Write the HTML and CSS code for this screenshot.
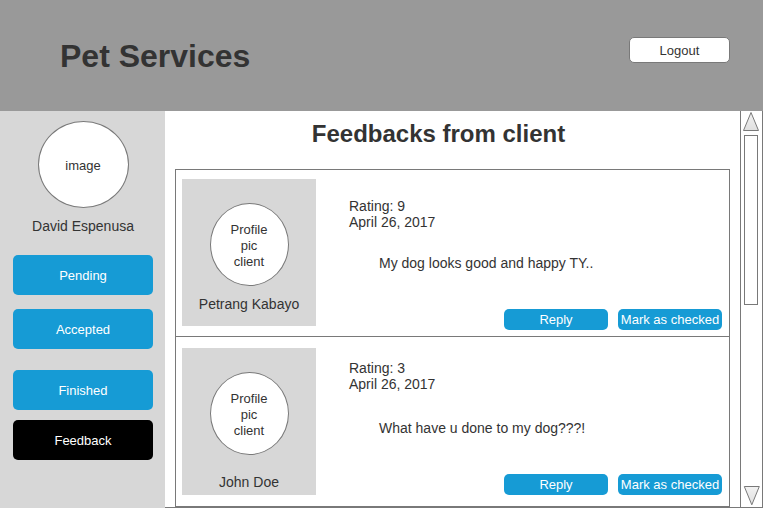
FILE: index.html
```html
<!DOCTYPE html>
<html lang="en">
<head>
  <meta charset="utf-8">
  <meta name="viewport" content="width=device-width, initial-scale=1">
  <title>Pet Services</title>
  <link rel="stylesheet" href="styles.css">
</head>
<body>
  <header class="header">
    <h1 class="brand">Pet Services</h1>
    <button class="logout" type="button">Logout</button>
  </header>
  <div class="page">
    <aside class="sidebar">
      <div class="avatar avatar-large">image</div>
      <p class="user-name">David Espenusa</p>
      <nav class="menu">
        <button class="button menu-item" type="button">Pending</button>
        <button class="button menu-item" type="button">Accepted</button>
        <button class="button menu-item menu-item-last-status" type="button">Finished</button>
        <button class="button menu-item menu-item-current" type="button">Feedback</button>
      </nav>
    </aside>
    <div class="content">
      <main class="feedback">
        <h2 class="title">Feedbacks from client</h2>
        <div class="feed">
          <article class="card">
            <div class="client">
              <div class="avatar">Profile pic client</div>
              <p class="client-name">Petrang Kabayo</p>
            </div>
            <div class="details">
              <p>Rating: 9</p>
              <p>April 26, 2017</p>
              <p class="message">My dog looks good and happy TY..</p>
              <div class="actions">
                <button class="button action" type="button">Reply</button>
                <button class="button action" type="button">Mark as checked</button>
              </div>
            </div>
          </article>
          <article class="card card-spaced">
            <div class="client">
              <div class="avatar">Profile pic client</div>
              <p class="client-name">John Doe</p>
            </div>
            <div class="details">
              <p>Rating: 3</p>
              <p>April 26, 2017</p>
              <p class="message">What have u done to my dog???!</p>
              <div class="actions">
                <button class="button action" type="button">Reply</button>
                <button class="button action" type="button">Mark as checked</button>
              </div>
            </div>
          </article>
        </div>
      </main>
      <div class="scroll">
        <svg class="arrow" width="18" height="20" viewBox="0 0 18 20" aria-hidden="true">
          <defs>
            <linearGradient id="shade" x1="0" y1="0" x2="0" y2="1">
              <stop offset="0" stop-color="#f2f2f2"/>
              <stop offset="1" stop-color="#e0e0e0"/>
            </linearGradient>
          </defs>
          <path d="M9 1.5 L16.5 19.5 H1.5 Z" fill="url(#shade)" stroke="#797979"/>
        </svg>
        <div class="thumb"></div>
        <svg class="arrow arrow-down" width="18" height="20" viewBox="0 0 18 20" aria-hidden="true">
          <path d="M2.3 .5 H17.3 L9.8 18.8 Z" fill="url(#shade)" stroke="#797979"/>
        </svg>
      </div>
    </div>
  </div>
</body>
</html>
```
FILE: styles.css
```css
* {
  box-sizing: border-box;
}

body {
  display: flex;
  flex-direction: column;
  min-height: 100vh;
  margin: 0;
  background: #fff;
  color: #333;
  font-family: "Liberation Sans", Arial, sans-serif;
  font-size: 14px;
  line-height: 16px;
}

h1,
h2,
p {
  margin: 0;
}

button {
  padding: 0;
  font-family: inherit;
  font-size: 13px;
  line-height: 16px;
  white-space: nowrap;
  cursor: pointer;
}

.header {
  display: flex;
  align-items: flex-start;
  justify-content: space-between;
  padding: 37px 33px 35px 60px;
  background: #999;
}

.brand {
  font-size: 32px;
  line-height: 39px;
}

.logout {
  width: 101px;
  height: 26px;
  padding-top: 2px;
  border: 1px solid #797979;
  border-radius: 5px;
  background: #fff;
  color: #333;
}

.page {
  display: flex;
  flex: 1;
}

.sidebar {
  display: flex;
  flex: 0 0 165px;
  flex-direction: column;
  align-items: center;
  padding: 10px 12px 10px 13px;
  background: #d7d7d7;
}

.avatar {
  display: flex;
  align-items: center;
  justify-content: center;
  width: 79px;
  height: 83px;
  padding: 2px 18px 0;
  border: 1px solid #797979;
  border-radius: 50%;
  background: #fff;
  font-size: 13px;
  text-align: center;
}

.avatar-large {
  width: 91px;
  height: 87px;
}

.user-name {
  margin: 10px 0 21px;
}

.menu {
  display: flex;
  flex-direction: column;
  gap: 14px;
  width: 140px;
}

.button {
  border: 0;
  border-radius: 5px;
  background: #169bd5;
  color: #fff;
}

.menu-item {
  height: 40px;
  padding-top: 2px;
}

.menu-item-last-status {
  margin: 7px 0 -4px;
}

.menu-item-current {
  background: #000;
}

.content {
  display: flex;
  flex: 1;
  min-width: 0;
  border-right: 1px solid #797979;
  border-bottom: 1px solid #797979;
}

.feedback {
  flex: 1;
  min-width: 0;
  padding: 9px 10px 0;
}

.title {
  padding-right: 28px;
  margin-bottom: 21px;
  font-size: 24px;
  line-height: 28px;
  text-align: center;
}

.feed {
  border: 1px solid #797979;
}

.card {
  display: flex;
  gap: 33px;
  padding: 9px 7px 10px 6px;
}

.card-spaced {
  padding-top: 11px;
  padding-bottom: 11px;
  border-top: 1px solid #797979;
}

.client {
  display: flex;
  flex: 0 0 134px;
  flex-direction: column;
  align-items: center;
  height: 147px;
  padding-top: 24px;
  background: #d7d7d7;
}

.client-name {
  margin-top: 10px;
}

.card-spaced .client-name {
  margin-top: 19px;
}

.details {
  display: flex;
  flex: 1;
  flex-direction: column;
  padding-top: 19px;
  margin-bottom: -4px;
}

.card-spaced .details {
  padding-top: 12px;
  margin-bottom: 0;
}

.message {
  margin: 25px 0 0 30px;
}

.card-spaced .message {
  margin-top: 28px;
}

.actions {
  display: flex;
  justify-content: flex-end;
  gap: 10px;
  margin-top: auto;
}

.action {
  width: 104px;
  height: 21px;
}

.scroll {
  display: flex;
  flex: 0 0 22px;
  flex-direction: column;
  align-items: center;
  padding-right: 1px;
  border-left: 1px solid #797979;
}

.arrow {
  flex: none;
}

.arrow-down {
  margin: auto 0 1px;
}

.thumb {
  width: 14px;
  height: 170px;
  margin-top: 4px;
  border: 1px solid #797979;
}
```
